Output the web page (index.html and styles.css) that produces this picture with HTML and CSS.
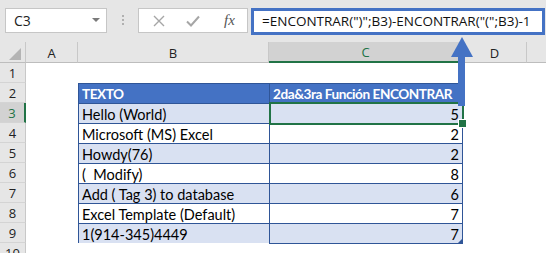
FILE: index.html
```html
<!DOCTYPE html>
<html lang="es">
<head>
<meta charset="utf-8">
<title>ENCONTRAR</title>
<link rel="stylesheet" href="styles.css">
</head>
<body>
<div class="app">
  <div class="toolbar">
    <div class="namebox"><span class="ref">C3</span><span class="dd"></span></div>
    <div class="grip"><i></i><i></i><i></i></div>
    <div class="btns">
      <svg class="ico" width="12" height="12" viewBox="0 0 12 12"><path d="M1 1L11 11M11 1L1 11" stroke="#a6a6a6" stroke-width="1.4" fill="none"/></svg>
      <svg class="ico" width="14" height="12" viewBox="0 0 14 12"><path d="M1 6.5L5 10.5L13 1.5" stroke="#a6a6a6" stroke-width="2" fill="none"/></svg>
      <span class="fx">fx</span>
    </div>
    <div class="formula">=ENCONTRAR(")";B3)-ENCONTRAR("(";B3)-1</div>
  </div>
  <div class="sheet">
    <div class="ch corner"><span class="tri"></span></div>
    <div class="ch">A</div>
    <div class="ch">B</div>
    <div class="ch sel">C</div>
    <div class="ch">D</div>
    <div class="ch end"></div>

    <div class="rh">1</div><div class="c"></div><div class="c"></div><div class="c"></div><div class="c"></div><div class="c"></div>

    <div class="rh">2</div><div class="c"></div><div class="c t th tl">TEXTO</div><div class="c t th tr">2da&amp;3ra Función ENCONTRAR</div><div class="c"></div><div class="c"></div>

    <div class="rh rsel">3</div><div class="c"></div><div class="c t tl band">Hello (World)</div><div class="c t tr band num active">5</div><div class="c"></div><div class="c"></div>

    <div class="rh">4</div><div class="c"></div><div class="c t tl">Microsoft (MS) Excel</div><div class="c t tr num">2</div><div class="c"></div><div class="c"></div>

    <div class="rh">5</div><div class="c"></div><div class="c t tl band">Howdy(76)</div><div class="c t tr band num">2</div><div class="c"></div><div class="c"></div>

    <div class="rh">6</div><div class="c"></div><div class="c t tl pre">(  Modify)</div><div class="c t tr num">8</div><div class="c"></div><div class="c"></div>

    <div class="rh">7</div><div class="c"></div><div class="c t tl band">Add ( Tag 3) to database</div><div class="c t tr band num">6</div><div class="c"></div><div class="c"></div>

    <div class="rh">8</div><div class="c"></div><div class="c t tl">Excel Template (Default)</div><div class="c t tr num">7</div><div class="c"></div><div class="c"></div>

    <div class="rh">9</div><div class="c"></div><div class="c t tl band last">1(914-345)4449</div><div class="c t tr band num last corner-h">7</div><div class="c"></div><div class="c"></div>

    <div class="rh">10</div><div class="c"></div><div class="c"></div><div class="c"></div><div class="c"></div><div class="c"></div>
  </div>
  <svg class="arrow" width="30" height="75" viewBox="0 0 30 75">
    <polygon points="1,20 12,0 23,20" fill="#4472c4"/>
    <rect x="8" y="19" width="7" height="50" fill="#4472c4"/>
  </svg>
</div>
</body>
</html>
```
FILE: styles.css
```css
* { box-sizing: border-box; }
html, body { margin: 0; padding: 0; background: #fff; }
.app {
  position: relative;
  width: 546px;
  height: 253px;
  overflow: hidden;
  font-family: "Lato", "Liberation Sans", sans-serif;
}
.toolbar {
  height: 42px;
  background: #e6e6e6;
  display: flex;
  align-items: flex-start;
  padding: 8px 0 0 5px;
}
.namebox {
  width: 102px;
  height: 25px;
  background: #fff;
  border: 1px solid #c6c6c6;
  display: flex;
  align-items: center;
  justify-content: space-between;
  padding: 0 6px 0 8px;
  font-family: "Open Sans", "Liberation Sans", sans-serif;
  font-size: 14px;
  color: #222;
}
.dd {
  width: 0; height: 0;
  border-left: 4px solid transparent;
  border-right: 4px solid transparent;
  border-top: 4px solid #7a7a7a;
  margin-top: -2px;
}
.grip {
  width: 31px;
  display: flex;
  flex-direction: column;
  align-items: center;
  gap: 2px;
  padding-top: 7px;
}
.grip i { display: block; width: 2px; height: 2px; background: #b0b0b0; }
.btns {
  width: 110px;
  height: 25px;
  background: #fff;
  border: 1px solid #c6c6c6;
  display: flex;
  align-items: center;
  padding: 0 0 0 14px;
  gap: 20px;
}
.btns .ico:nth-child(2) { margin-left: 1px; }
.fx {
  font-family: "Liberation Serif", serif;
  font-style: italic;
  font-size: 15px;
  color: #555;
  margin-left: 4px;
}
.formula {
  margin-left: 3px;
  width: 294px;
  height: 27px;
  border: 3px solid #4472c4;
  background: #fff;
  font-family: "Open Sans", "Liberation Sans", sans-serif;
  font-size: 13.5px;
  line-height: 20px;
  padding-left: 8px;
  color: #111;
  white-space: nowrap;
}
.sheet {
  display: grid;
  grid-template-columns: 26px 52px 191px 194px 64px 1fr;
  grid-template-rows: 21px;
  grid-auto-rows: 20px;
  font-size: 14.5px;
}
.ch {
  background: #e6e6e6;
  border-bottom: 1px solid #bdbdbd;
  border-right: 1px solid #c8c8c8;
  display: flex;
  align-items: center;
  justify-content: center;
  font-family: "Open Sans", "Liberation Sans", sans-serif;
  font-size: 13px;
  color: #222;
  padding-top: 1px;
}
.ch.end { border-right: none; }
.ch.corner { position: relative; }
.tri {
  position: absolute;
  right: 4px;
  bottom: 2px;
  width: 0; height: 0;
  border-left: 12px solid transparent;
  border-bottom: 12px solid #b4b4b4;
}
.ch.sel {
  background: #d2d2d2;
  color: #217346;
  border-bottom: 2px solid #217346;
}
.rh {
  background: #e6e6e6;
  border-right: 1px solid #c8c8c8;
  border-bottom: 1px solid #d4d4d4;
  display: flex;
  align-items: center;
  justify-content: center;
  font-family: "Open Sans", "Liberation Sans", sans-serif;
  font-size: 13px;
  color: #222;
}
.rh.rsel {
  background: #d2d2d2;
  color: #217346;
  border-right: 2px solid #217346;
}
.c { background: #fff; }
.t {
  border-top: 1px solid #2f5597;
  display: flex;
  align-items: center;
  padding: 1px 3px 0 3px;
  font-family: "Lato", "Liberation Sans", sans-serif;
  color: #000;
  white-space: pre;
}
.tl { border-left: 1px solid #2f5597; }
.tr { border-right: 1px solid #2f5597; border-left: 1px solid #2f5597; }
.th {
  background: #4472c4;
  color: #fff;
  font-weight: bold;
  font-size: 13.6px;
  letter-spacing: -0.45px;
  overflow: hidden;
}
.band { background: #d9e1f2; }
.num { justify-content: flex-end; }
.last { border-bottom: 1px solid #2f5597; height: 21px; }
.active { position: relative; }
.active::after {
  content: "";
  position: absolute;
  left: -1px; right: -2px; top: -2px; bottom: -2px;
  border: 2px solid #217346;
}
.active::before {
  content: "";
  position: absolute;
  right: -5px; bottom: -5px;
  width: 7px; height: 7px;
  background: #217346;
  border: 1px solid #fff;
  z-index: 2;
}
.corner-h { position: relative; }
.corner-h::after {
  content: "";
  position: absolute;
  right: 0; bottom: 0;
  width: 0; height: 0;
  border-left: 4px solid transparent;
  border-bottom: 4px solid #2f5597;
}
.arrow {
  position: absolute;
  left: 450px;
  top: 37px;
}
```
